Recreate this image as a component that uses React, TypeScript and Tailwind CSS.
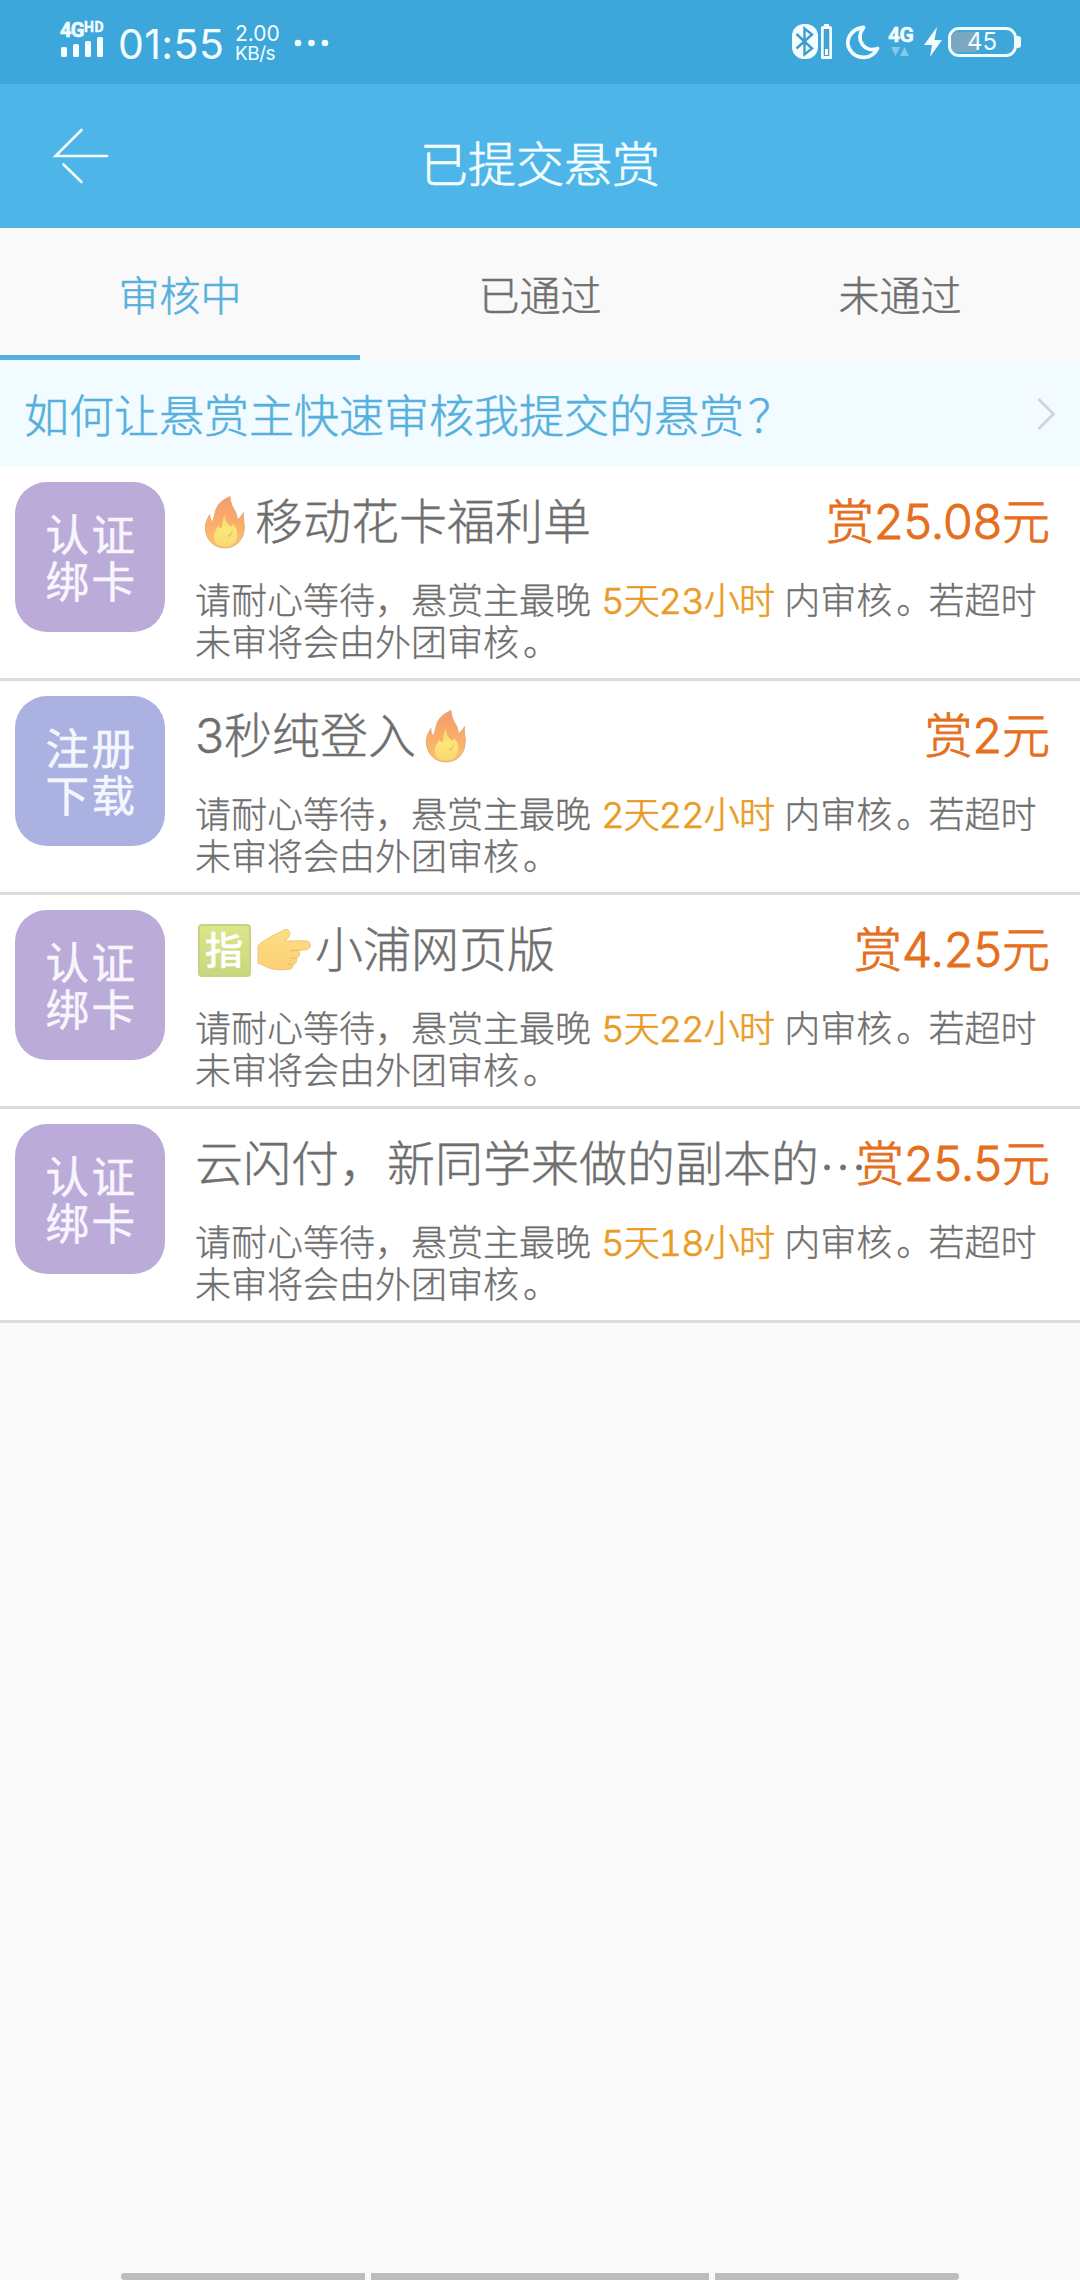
import type { ReactNode } from "react";

function Flame() {
  return (
    <svg width="60" height="56" viewBox="-0.500 0 60 56" className="shrink-0">
      <defs>
        <linearGradient id="flameOuter" x1="0" y1="0" x2="0" y2="1">
          <stop offset="0" stopColor="#f59a70" />
          <stop offset="0.5" stopColor="#faac68" />
          <stop offset="1" stopColor="#fbc56f" />
        </linearGradient>
        <linearGradient id="flameInner" x1="0" y1="0" x2="0" y2="1">
          <stop offset="0" stopColor="#fbd06c" />
          <stop offset="0.45" stopColor="#fbe878" />
          <stop offset="1" stopColor="#fad774" />
        </linearGradient>
      </defs>
      <path
        d="M34.500 2.500C35 9 36.500 12 39.500 17C41 20 41.800 23 41.800 25.500C44.500 24 46.500 21.500 48 18.500C47.500 23 48.500 27 48.800 32C49.300 45 41 54 29.500 54C18 54 9.500 45 9.800 33C10 28 12 24.500 14.300 20.500C14.300 23.500 15 26 16.800 28C18.800 24.500 18.800 20 20.300 16C22.500 9.500 27.500 5.500 34.500 2.500Z"
        fill="url(#flameOuter)"
        stroke="#e0aa7c"
        strokeWidth="0.9"
      />
      <path
        d="M29.500 21C29.800 27 32 30 36 33C36.500 32 37 31 37.500 30C41 34 42.500 38 41.500 43C40 49.500 35 52.500 29.500 52.500C23 52.500 17.500 48 18.500 41C19 37 21.500 34.500 22.800 31.500C24.300 35 26.800 35 26.800 31C26.800 27.500 27 24 29.500 21Z"
        fill="url(#flameInner)"
      />
      <path d="M36.800 33.500C37.800 38 36.800 41.500 33.300 43.500C31.800 42 32.500 40.500 34.300 39.500C36.300 38.500 36.800 36.500 36.800 33.500Z" fill="#e6ca74" />
    </svg>
  );
}

function PointingHand() {
  return (
    <svg width="61" height="56" viewBox="0 0 61 56" className="shrink-0">
      <defs>
        <linearGradient id="hand" x1="0" y1="0" x2="0" y2="1">
          <stop offset="0" stopColor="#fddd84" />
          <stop offset="1" stopColor="#fdd076" />
        </linearGradient>
      </defs>
      <path
        d="M4 23.500C8 19.500 13 17 18 14C22 11.500 26.500 10.500 30 8C33.500 5.800 37 9.500 35.500 13.500C34.500 16 32.500 17.500 31 19L51.500 18.800C58 19 58 27.500 51.500 27.800L44 28.500C46.500 30.500 46 35 42.500 36C43.500 39 42 42 39 42.500C39.500 46 37 47.500 33.500 47.500C26 48.500 17 47.500 11.500 44.500C8.500 43 6.500 42 4 41.500Z"
        fill="url(#hand)"
        stroke="#e9c26f"
        strokeWidth="0.9"
      />
      <path d="M36.500 28.800L44 28.300M36 36H42M34 42.300H38.500" stroke="#e3b868" strokeWidth="1.100" fill="none" />
    </svg>
  );
}

function ZhiBadge() {
  return (
    <span className="ml-[2.500px] mr-[3.500px] mt-[1px] flex h-[53px] w-[53px] shrink-0 items-center justify-center rounded-[4px] border-2 border-[#c9d283] bg-linear-to-b from-[#dce58a] to-[#c8d87e] pb-[1px] text-[38px] leading-none font-medium text-white">
      指
    </span>
  );
}

type Item = { tag: [string, string]; blue?: boolean; title: ReactNode; price: string; time: string };

const items: Item[] = [
  { tag: ["认证", "绑卡"], title: <><Flame />移动花卡福利单</>, price: "25.08", time: "5天23小时" },
  { tag: ["注册", "下载"], blue: true, title: <>3秒纯登入<Flame /></>, price: "2", time: "2天22小时" },
  { tag: ["认证", "绑卡"], title: <><ZhiBadge /><PointingHand />小浦网页版</>, price: "4.25", time: "5天22小时" },
  {
    tag: ["认证", "绑卡"],
    title: <>云闪付，新同学来做的副本的<span className="font-['Noto_Sans_CJK_SC',sans-serif]">…</span></>,
    price: "25.5",
    time: "5天18小时",
  },
];

function StatusBar() {
  return (
    <div className="flex h-[84px] justify-between bg-[#3da7dc] text-[#f3fdff]">
      <div className="flex pl-[60px]">
        <div className="w-[48px] pt-[22px]">
          <div className="flex items-start font-['Roboto',sans-serif] font-bold whitespace-nowrap">
            <span className="w-[24px] text-[20px] leading-[16px] tracking-[-0.8px] [-webkit-text-stroke:0.6px]">4G</span>
            <span className="text-[14px] leading-[11px] tracking-[0.5px] [-webkit-text-stroke:0.4px]">HD</span>
          </div>
          <svg width="45" height="20" className="-mt-[1px] block" fill="currentColor">
            <rect x="1" y="10" width="6" height="10" rx="1.500" />
            <rect x="13" y="7" width="6" height="13" rx="1.500" />
            <rect x="25" y="4" width="6" height="16" rx="1.500" />
            <rect x="37" y="0" width="6" height="20" rx="1.500" />
          </svg>
        </div>
        <div className="ml-[10px] w-[107px] pt-[20px] text-[41px] leading-[48px] tracking-[0.4px] whitespace-nowrap">01:55</div>
        <div className="ml-[10px] w-[50px] pt-[24px] whitespace-nowrap">
          <div className="text-[21px] leading-[20px]">2.00</div>
          <div className="text-[19px] leading-[20px] tracking-[-0.5px]">KB/s</div>
        </div>
        <svg width="36" height="84" className="ml-[9px]" fill="currentColor">
          <circle cx="4" cy="43" r="3.300" />
          <circle cx="17.500" cy="43" r="3.300" />
          <circle cx="31" cy="43" r="3.300" />
        </svg>
      </div>
      <div className="flex pr-[59px]">
        <svg width="92" height="84" viewBox="792 0 92 84" fill="none">
          <rect x="792" y="24" width="26" height="35" rx="12" fill="currentColor" />
          <path d="M796.500 34L812 48.500L804.500 54.500V28.500L812 34.500L796.500 48.500" stroke="#3d9dcc" strokeWidth="2.400" />
          <path d="M821 28a2 2 0 0 1 2-2h1v-2h5v2h1a2 2 0 0 1 2 2v30a1 1 0 0 1-1 1h-9a1 1 0 0 1-1-1z" fill="currentColor" />
          <path d="M824.200 29.500h4.600v26h-4.600z" fill="#3da7dc" stroke="#3587b5" strokeWidth="0.8" />
          <path d="M825 49h3v6h-3z" fill="currentColor" />
          <path d="M863.500 27.500C850 29 844.500 41 850 50C856.500 60 872 60 877.500 48.500C865 53 854 40 863.500 27.500Z" stroke="currentColor" strokeWidth="3.800" strokeLinejoin="round" />
        </svg>
        <div className="ml-[4px] w-[32px] pt-[26px]">
          <div className="font-['Roboto',sans-serif] text-[21px] leading-[18px] font-bold tracking-[-0.5px] [-webkit-text-stroke:0.5px]">4G</div>
          <svg width="22" height="10" className="mt-[3px] block" fill="#83c9ec">
            <path d="M3 0h9L7.500 9zM12 9h9L16.500 0z" />
          </svg>
        </div>
        <svg width="22" height="84" viewBox="923 0 22 84" className="ml-[3px]" fill="currentColor">
          <path d="M937 27L924 45H932L930 57L942 40H934.500Z" />
        </svg>
        <div className="ml-[3px] mt-[27px] flex h-[30px] w-[69px] items-center rounded-[11px] border-[3px] border-current">
          <div className="h-[20px] w-[26px] shrink-0 rounded-l-[6px] bg-[#7aa8c3]" />
          <span className="-ml-[10px] text-[24px] leading-[24px]">45</span>
        </div>
        <div className="mt-[36px] h-[12px] w-[4px] rounded-r-[3px] bg-current" />
      </div>
    </div>
  );
}

function Row({ item }: { item: Item }) {
  return (
    <div className="flex h-[214px] border-b-[3px] border-[#dbdbdb] bg-white pr-[30px] pl-[15px]">
      {item.blue ? (
        <div className="mt-[15px] flex size-[150px] shrink-0 flex-col items-center rounded-[32px] bg-[#abb2e1] pt-[30px] pl-[3px] text-[43.500px] leading-[47px] tracking-[2.500px] text-[#f5f7ff] [-webkit-text-stroke:0.5px]">
          <span>{item.tag[0]}</span>
          <span>{item.tag[1]}</span>
        </div>
      ) : (
        <div className="mt-[15px] flex size-[150px] shrink-0 flex-col items-center rounded-[32px] bg-[#bbabd8] pt-[30px] pl-[3px] text-[43.500px] leading-[47px] tracking-[2.500px] text-[#f8f5ff] [-webkit-text-stroke:0.5px]">
          <span>{item.tag[0]}</span>
          <span>{item.tag[1]}</span>
        </div>
      )}
      <div className="ml-[30px] min-w-0 flex-1">
        <div className="mt-[27px] flex h-[56px] items-center justify-between text-[48px] leading-[56px] font-light whitespace-nowrap">
          <div className="flex min-w-0 items-center text-[#6f6f6f] [-webkit-text-stroke:0.4px]">{item.title}</div>
          <div className="shrink-0 text-[#e56f1c] [-webkit-text-stroke:0.9px]">赏{item.price}元</div>
        </div>
        <div className="mt-[30px] text-[36px] leading-[42px] font-light whitespace-nowrap text-[#6f6f6f] [-webkit-text-stroke:0.3px]">
          请耐心等待，悬赏主最晚{" "}
          <span className="tracking-[-0.8px] text-[#e99c26] tabular-nums [-webkit-text-stroke:0.7px]">{item.time}</span> 内审核
          <span className="mr-[-4px] ml-[4px]">。</span>若超时
          <br />
          未审将会由外团审核<span className="ml-[4px]">。</span>
        </div>
      </div>
    </div>
  );
}

export default function App() {
  return (
    <div className="flex h-[2280px] w-[1080px] flex-col overflow-hidden bg-[#fafafa] font-['Inter','Noto_Sans_CJK_SC',sans-serif]">
      <StatusBar />
      <header className="grid h-[144px] grid-cols-[120px_1fr_120px] items-center bg-[#4db5e8] text-[#f3fdff]">
        <svg width="120" height="144" fill="none" stroke="currentColor" strokeWidth="2.600" strokeLinecap="round">
          <path d="M81.500 46L55.500 72H107M63.500 80.500L81.500 98" />
        </svg>
        <h1 className="pt-[17px] text-center text-[48px] leading-[56px] font-light [-webkit-text-stroke:0.7px]">已提交悬赏</h1>
      </header>
      <nav className="grid h-[132px] grid-cols-3 bg-[#f9f9f9] text-center text-[41px] leading-[60px] font-light text-[#6f6f6f] [-webkit-text-stroke:0.5px]">
        <div className="border-b-[5px] border-[#55b0dd] pt-[38px] text-[#55b0dd]">审核中</div>
        <div className="pt-[38px]">已通过</div>
        <div className="pt-[38px]">未通过</div>
      </nav>
      <div className="flex h-[107px] items-center justify-between bg-[#f2fbff] pr-[24px] pl-[24px] text-[45px] leading-[60px] text-[#55b0dd]">
        <span className="pt-[6px] font-light [-webkit-text-stroke:0.5px]">
          如何让悬赏主快速审核我提交的悬赏<span className="ml-[4px]">？</span>
        </span>
        <svg width="19" height="32" fill="none" stroke="#d0d4d6" strokeWidth="2.800">
          <path d="M1.500 1L16.500 16L1.500 31" />
        </svg>
      </div>
      {items.map((item, i) => (
        <Row key={i} item={item} />
      ))}
      <div className="mt-auto flex h-[7px] gap-[6px] pl-[121px]">
        <div className="w-[244px] rounded-l-[3px] bg-[#bdbdbd]" />
        <div className="w-[338px] bg-[#bdbdbd]" />
        <div className="w-[244px] rounded-r-[3px] bg-[#bdbdbd]" />
      </div>
    </div>
  );
}
